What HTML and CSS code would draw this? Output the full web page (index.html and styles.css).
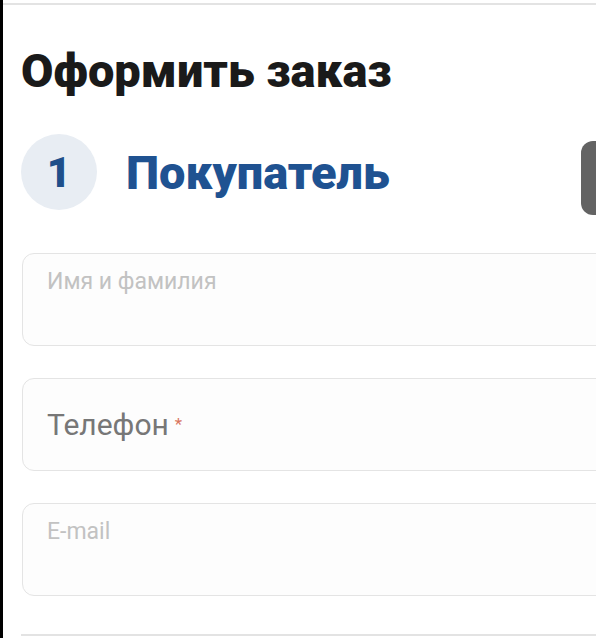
FILE: index.html
```html
<!DOCTYPE html>
<html lang="ru">
<head>
    <meta charset="UTF-8">
    <meta name="viewport" content="width=device-width, initial-scale=1.0">
    <title>Оформить заказ</title>
    <link rel="stylesheet" href="styles.css">
</head>
<body>
    <div class="page">
        <div class="topline"></div>
        <div class="checkout">
            <h1>Оформить заказ</h1>
            <div class="step">
                <div class="step-num">1</div>
                <h2>Покупатель</h2>
                <button class="step-btn" type="button"></button>
            </div>
            <form class="fields">
                <label class="field field-top">
                    <span class="label">Имя и фамилия</span>
                </label>
                <label class="field field-mid">
                    <span class="label label-big">Телефон<span class="req">*</span></span>
                </label>
                <label class="field field-top">
                    <span class="label">E-mail</span>
                </label>
            </form>
            <div class="divider"></div>
        </div>
    </div>
</body>
</html>
```

FILE: styles.css
```css
html, body {
    margin: 0;
    background: #fff;
    overflow: hidden;
}
.page {
    border-left: 3px solid #000;
    min-height: 100vh;
    padding-top: 3px;
    box-sizing: border-box;
}
.topline {
    height: 2px;
    background: #e3e3e3;
}
.checkout {
    padding-left: 18px;
}
h1 {
    margin: 40px 0 0;
    font-family: Roboto, sans-serif;
    font-weight: 900;
    font-size: 47px;
    line-height: 52px;
    color: #1a1a1a;
}
.step {
    display: flex;
    align-items: center;
    margin-top: 32px;
}
.step-num {
    width: 76px;
    height: 76px;
    flex-shrink: 0;
    border-radius: 50%;
    background: #e8edf3;
    color: #1f4f8a;
    font-family: Roboto, sans-serif;
    font-weight: 900;
    font-size: 42px;
    display: flex;
    align-items: center;
    justify-content: center;
}
h2 {
    margin: 0 0 0 29px;
    font-family: Roboto, sans-serif;
    font-weight: 900;
    font-size: 47px;
    color: #1f5291;
}
.step-btn {
    margin: 12px -40px 0 auto;
    width: 55px;
    height: 74px;
    flex-shrink: 0;
    border: none;
    border-radius: 12px;
    background: #636363;
}
.fields {
    display: flex;
    flex-direction: column;
    gap: 32px;
    margin-top: 38px;
    margin-left: 1px;
    margin-right: -30px;
}
.field {
    display: flex;
    height: 93px;
    box-sizing: border-box;
    border: 1.5px solid #e4e4e4;
    border-radius: 12px;
    background: #fdfdfd;
    padding: 0 24px;
    font-family: Roboto, sans-serif;
}
.field-top {
    align-items: flex-start;
    padding-top: 14px;
}
.field-mid {
    align-items: center;
}
.label {
    font-size: 23px;
    color: #c2c2c2;
}
.label-big {
    font-size: 30px;
    color: #777;
}
.req {
    color: #d9765e;
    font-size: 17px;
    vertical-align: 5px;
    margin-left: 6px;
}
.divider {
    margin-top: 38px;
    height: 2px;
    background: #e3e3e3;
}
```
